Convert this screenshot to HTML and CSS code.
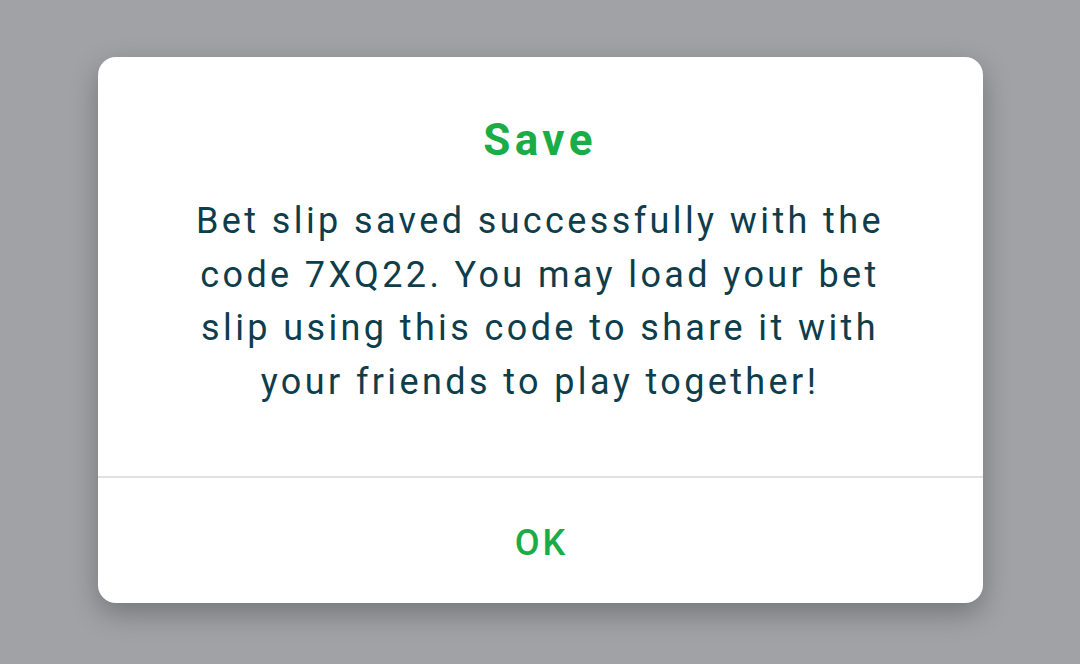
FILE: index.html
```html
<!DOCTYPE html>
<html lang="en">
<head>
  <meta charset="UTF-8" />
  <meta name="viewport" content="width=device-width, initial-scale=1.0"/>
  <title>Save</title>
  <link rel="stylesheet" href="styles.css">
</head>
<body>
<div class="overlay">
  <div class="dialog">
    <div class="dialog-body">
      <h2 class="title">Save</h2>
      <p class="message">Bet slip saved successfully with the code 7XQ22. You may load your bet slip using this code to share it with your friends to play together!</p>
    </div>
    <div class="actions">
      <button class="ok-btn">OK</button>
    </div>
  </div>
</div>
</body>
</html>
```

FILE: styles.css
```css
* {
  box-sizing: border-box;
}

body {
  margin: 0;
  font-family: Roboto, 'Noto Sans', sans-serif;
  background: #a1a2a6;
}

.overlay {
  height: 664px;
  display: flex;
  justify-content: center;
  align-items: flex-start;
  padding-top: 57px;
}

.dialog {
  width: 885px;
  background: #fff;
  border-radius: 18px;
  box-shadow: 0 10px 28px rgba(0, 0, 0, 0.28);
  display: flex;
  flex-direction: column;
}

.dialog-body {
  padding: 58px 72px 67px;
  text-align: center;
  border-bottom: 2px solid #e0e1e6;
}

.title {
  margin: 0;
  font-size: 44px;
  line-height: 50px;
  font-weight: 700;
  letter-spacing: 0.1em;
  color: #1aad47;
}

.message {
  margin: 30px 0 0;
  font-size: 36px;
  line-height: 53.5px;
  letter-spacing: 0.094em;
  color: #0e3d4c;
}

.actions {
  height: 125px;
  display: flex;
  align-items: center;
  justify-content: center;
  padding-top: 5px;
}

.ok-btn {
  border: none;
  background: none;
  font-family: inherit;
  font-size: 36px;
  font-weight: 500;
  letter-spacing: 0.08em;
  color: #1aad47;
  cursor: pointer;
  padding: 0 0 0 0.08em;
}
```
